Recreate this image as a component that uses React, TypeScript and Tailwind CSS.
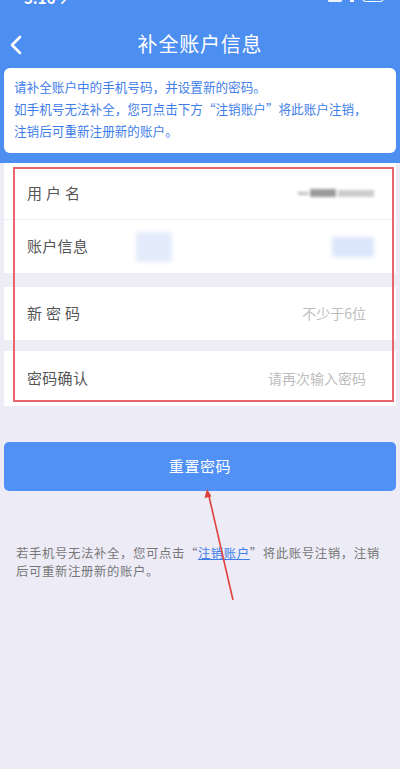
import React from 'react';

const font = { fontFamily: '"Noto Sans CJK SC", "Noto Sans", sans-serif' };

function Row({ label, children, border, tall }: { label: string; children?: React.ReactNode; border?: boolean; tall?: boolean }) {
  return (
    <div className={`flex items-center justify-between ${tall ? 'h-[55px]' : 'h-[53px]'} pl-[23px] pr-[30px] ${border ? 'border-b border-[#f0eff5]' : ''}`}>
      <span className="text-[15px] text-[#555] tracking-[0.02em]">{label}</span>
      {children}
    </div>
  );
}

export default function App() {
  return (
    <div className="relative w-[400px] h-[769px] bg-[#edecf6] overflow-hidden" style={font}>
      {/* header */}
      <div className="bg-[#4d8ef1] pb-[10px]">
        <div className="h-[14px] relative overflow-hidden text-white">
          <span className="absolute left-[24px] -top-[13px] text-[15px] font-semibold">3:16 ↗</span>
          <div className="absolute right-[16px] -top-[2px] flex items-center gap-[8px]">
            <div className="w-[14px] h-[3px] bg-white/90 rounded-sm" />
            <div className="w-[4px] h-[3px] bg-white/90" />
            <div className="w-[22px] h-[4px] border border-white rounded-b-sm" />
          </div>
        </div>
        <div className="relative h-[54px] flex items-center justify-center">
          <svg className="absolute left-[9px] top-[21px]" width="14" height="20" viewBox="0 0 14 20" fill="none">
            <path d="M11 2 L3 10 L11 18" stroke="white" strokeWidth="2.6" strokeLinecap="round" strokeLinejoin="round" />
          </svg>
          <h1 className="text-white text-[20px] tracking-[0.04em] mt-[6px]">补全账户信息</h1>
        </div>
        <div className="mx-[4px] bg-white rounded-[6px] px-[10px] pt-[8px] pb-[11px] text-[12.6px] leading-[22px] text-[#3f7ee8]">
          <p>请补全账户中的手机号码，并设置新的密码。</p>
          <p>如手机号无法补全，您可点击下方“注销账户”将此账户注销，</p>
          <p>注销后可重新注册新的账户。</p>
        </div>
      </div>

      {/* form */}
      <div className="mx-[4px] bg-white relative">
        <div className="absolute inset-y-[4px] left-[9px] right-[2px] border-2 border-solid border-[#e8656d] pointer-events-none z-10" />
        <div className="pt-[4px]">
          <Row label="用 户 名" border>
            <div className="flex items-center gap-[2px] mr-[-8px] blur-[1.5px]">
              <div className="w-[10px] h-[3px] bg-[#bbb]" />
              <div className="w-[26px] h-[8px] bg-[#999]" />
              <div className="w-[36px] h-[7px] bg-[#ccc]" />
            </div>
          </Row>
          <Row label="账户信息">
            <div className="flex-1 flex justify-between items-center ml-[48px] mr-[-8px] blur-[2px]">
              <div className="w-[36px] h-[30px] bg-[#e3ebfa]" />
              <div className="w-[42px] h-[20px] bg-[#dbe6fb]" />
            </div>
          </Row>
        </div>
        <div className="h-[14px] bg-[#eeedf5]" />
        <Row label="新 密 码">
          <span className="text-[14px] text-[#bdbdbd]">不少于6位</span>
        </Row>
        <div className="h-[11px] bg-[#eeedf5]" />
        <Row label="密码确认" tall>
          <span className="text-[14px] text-[#bdbdbd]">请再次输入密码</span>
        </Row>
      </div>

      {/* button */}
      <div className="mx-[4px] mt-[36px]">
        <button className="w-full h-[49px] rounded-[5px] bg-[#5191f5] text-white text-[15px] tracking-[0.04em]">
          重置密码
        </button>
      </div>

      <p className="mx-[16px] mt-[53px] text-[12.4px] leading-[18px] tracking-[0.6px] text-[#777]">
        若手机号无法补全，您可点击“<span className="text-[#3f7ee8] underline">注销账户</span>”将此账号注销，注销后可重新注册新的账户。
      </p>

      {/* annotation arrow */}
      <svg className="absolute left-0 top-0 pointer-events-none" width="400" height="769">
        <line x1="233" y1="600" x2="208" y2="492" stroke="#e0403c" strokeWidth="1.6" />
        <path d="M204.5 498 L207 489 L211.5 496.5 Z" fill="#e0403c" />
      </svg>
    </div>
  );
}
